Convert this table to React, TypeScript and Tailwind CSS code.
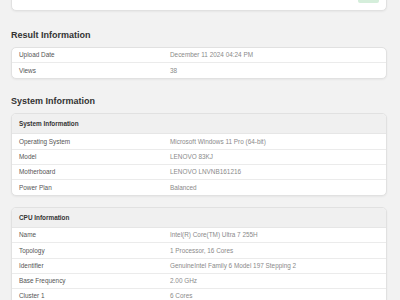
import React from "react";

type Row = [string, string];

const resultRows: Row[] = [
  ["Upload Date", "December 11 2024 04:24 PM"],
  ["Views", "38"],
];

const systemRows: Row[] = [
  ["Operating System", "Microsoft Windows 11 Pro (64-bit)"],
  ["Model", "LENOVO 83KJ"],
  ["Motherboard", "LENOVO LNVNB161216"],
  ["Power Plan", "Balanced"],
];

const cpuRows: Row[] = [
  ["Name", "Intel(R) Core(TM) Ultra 7 255H"],
  ["Topology", "1 Processor, 16 Cores"],
  ["Identifier", "GenuineIntel Family 6 Model 197 Stepping 2"],
  ["Base Frequency", "2.00 GHz"],
  ["Cluster 1", "6 Cores"],
  ["Cluster 2", "8 Cores"],
];

function InfoRows({ rows }: { rows: Row[] }) {
  return (
    <>
      {rows.map(([label, value]) => (
        <div
          key={label}
          className="grid grid-cols-[151px_1fr] items-center h-[15.2px] px-[7px] border-b border-[#ebebeb] last:border-b-0 text-[6.4px]"
        >
          <span className="text-[#555]">{label}</span>
          <span className="text-[#8a8a8a]">{value}</span>
        </div>
      ))}
    </>
  );
}

function Card({ title, rows }: { title?: string; rows: Row[] }) {
  return (
    <div className="bg-white border border-[#e1e1e1] rounded-[5px] shadow-[0_1px_2px_rgba(0,0,0,0.05)] overflow-hidden">
      {title && (
        <div className="h-[20px] flex items-center px-[7px] bg-[#f0f0f0] border-b border-[#e6e6e6] text-[6.4px] font-bold text-[#333]">
          {title}
        </div>
      )}
      <InfoRows rows={rows} />
    </div>
  );
}

export default function App() {
  return (
    <div
      className="w-[400px] h-[300px] overflow-hidden bg-[#f2f2f2] pl-[11px] pr-[13px]"
      style={{ fontFamily: '"Liberation Sans", Arial, sans-serif' }}
    >
      {/* top card, mostly scrolled off */}
      <div className="-mt-[29px] h-[40px] bg-white border border-[#e1e1e1] rounded-[5px] shadow-[0_1px_2px_rgba(0,0,0,0.05)] flex items-end justify-end pr-[7px] pb-[7px]">
        <span className="h-[11px] w-[21px] rounded-[2px] bg-[#d5eedb] text-[#5c9a6a] text-[6px] flex items-center justify-center">
          New
        </span>
      </div>

      <h2 className="mt-[18px] mb-[6px] leading-[12px] text-[9px] font-bold text-[#333]">
        Result Information
      </h2>
      <Card rows={resultRows} />

      <h2 className="mt-[16px] mb-[6px] leading-[12px] text-[9px] font-bold text-[#333]">
        System Information
      </h2>
      <Card title="System Information" rows={systemRows} />

      <div className="mt-[11px]">
        <Card title="CPU Information" rows={cpuRows} />
      </div>
    </div>
  );
}
